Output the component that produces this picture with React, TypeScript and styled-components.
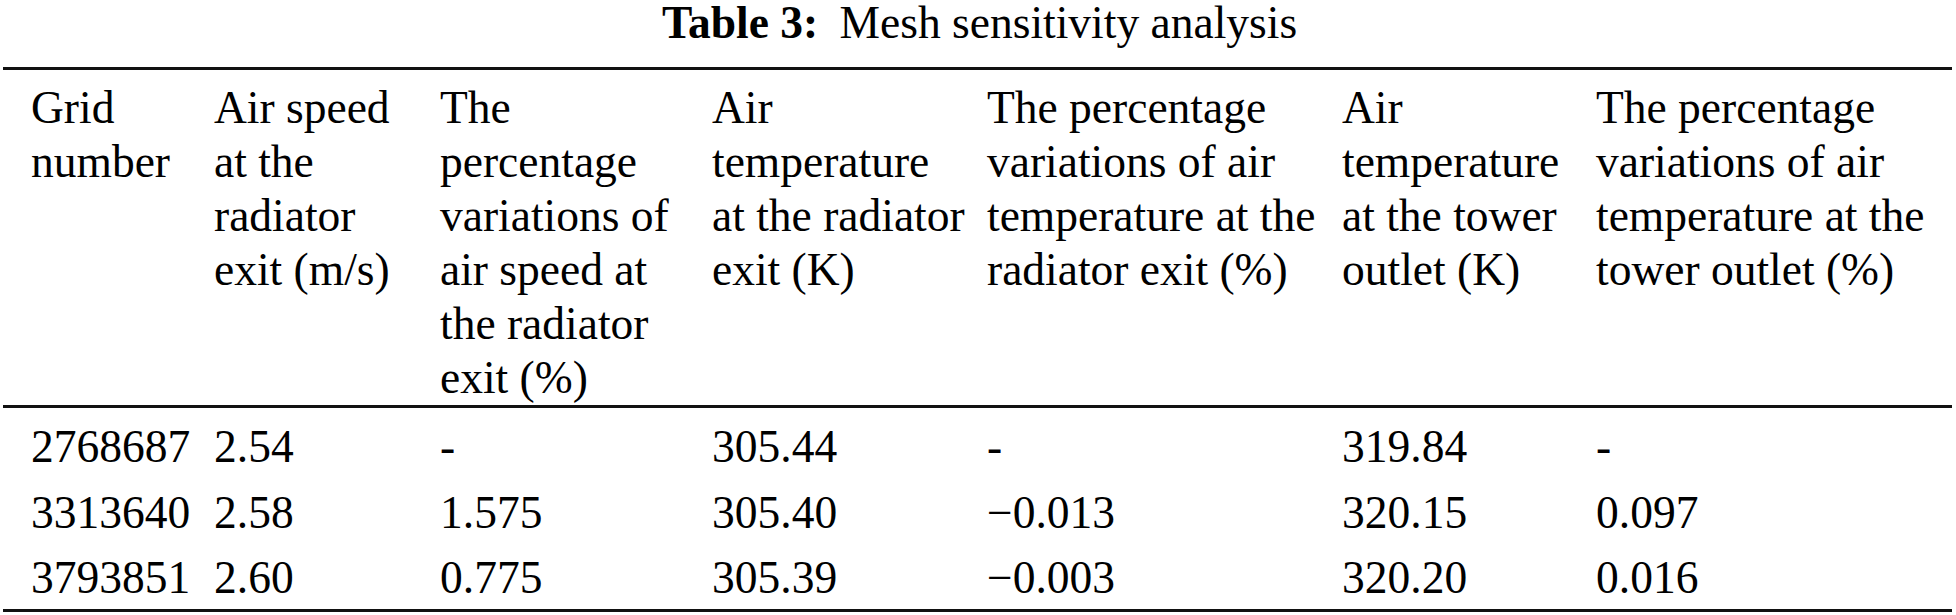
import React from "react";
import styled, { createGlobalStyle } from "styled-components";

const Global = createGlobalStyle`
  html, body {
    margin: 0;
    padding: 0;
    background: #ffffff;
  }
  body {
    font-family: "Liberation Serif", "Times New Roman", Times, serif;
    color: #000;
  }
`;

const Page = styled.div`
  width: 1949px;
  margin-left: 3px;
  font-family: "Liberation Serif", "Times New Roman", Times, serif;
  color: #000;
`;

const Caption = styled.div`
  text-align: center;
  font-size: 45.5px;
  line-height: 46px;
  height: 67px;
  padding-left: 4px;
  box-sizing: border-box;
`;

const CaptionLabel = styled.strong`
  font-weight: 700;
  margin-right: 10px;
`;

const Table = styled.div`
  display: grid;
  grid-template-columns: 183px 226px 272px 275px 355px 254px 1fr;
  padding-left: 28px;
  font-size: 45.5px;
`;

const Rule = styled.div`
  grid-column: 1 / -1;
  height: 3px;
  background: #111;
  margin-left: -28px;
`;

const HeadCell = styled.div`
  line-height: 54px;
  padding: 11px 0 0 0;
`;

const HeadLine = styled.span`
  display: block;
  white-space: nowrap;
`;

const Cell = styled.div<{ $first?: boolean; $last?: boolean }>`
  line-height: 44px;
  height: 44px;
  white-space: nowrap;
  padding-top: ${(p) => (p.$first ? "17px" : "21.5px")};
  padding-bottom: ${(p) => (p.$last ? "8.5px" : "0")};
`;

const headers: string[][] = [
  ["Grid", "number"],
  ["Air speed", "at the", "radiator", "exit (m/s)"],
  ["The", "percentage", "variations of", "air speed at", "the radiator", "exit (%)"],
  ["Air", "temperature", "at the radiator", "exit (K)"],
  ["The percentage", "variations of air", "temperature at the", "radiator exit (%)"],
  ["Air", "temperature", "at the tower", "outlet (K)"],
  ["The percentage", "variations of air", "temperature at the", "tower outlet (%)"],
];

const rows = [
  ["2768687", "2.54", "-", "305.44", "-", "319.84", "-"],
  ["3313640", "2.58", "1.575", "305.40", "\u22120.013", "320.15", "0.097"],
  ["3793851", "2.60", "0.775", "305.39", "\u22120.003", "320.20", "0.016"],
];

export default function App() {
  return (
    <>
      <Global />
      <Page>
        <Caption>
          <CaptionLabel>Table 3:</CaptionLabel> Mesh sensitivity analysis
        </Caption>
        <Table>
          <Rule />
          {headers.map((lines, i) => (
            <HeadCell key={i}>
              {lines.map((l, li) => (
                <HeadLine key={li}>{l}</HeadLine>
              ))}
            </HeadCell>
          ))}
          <Rule />
          {rows.map((r, ri) =>
            r.map((v, ci) => (
              <Cell
                key={`${ri}-${ci}`}
                $first={ri === 0}
                $last={ri === rows.length - 1}
              >
                {v}
              </Cell>
            ))
          )}
          <Rule />
        </Table>
      </Page>
    </>
  );
}
